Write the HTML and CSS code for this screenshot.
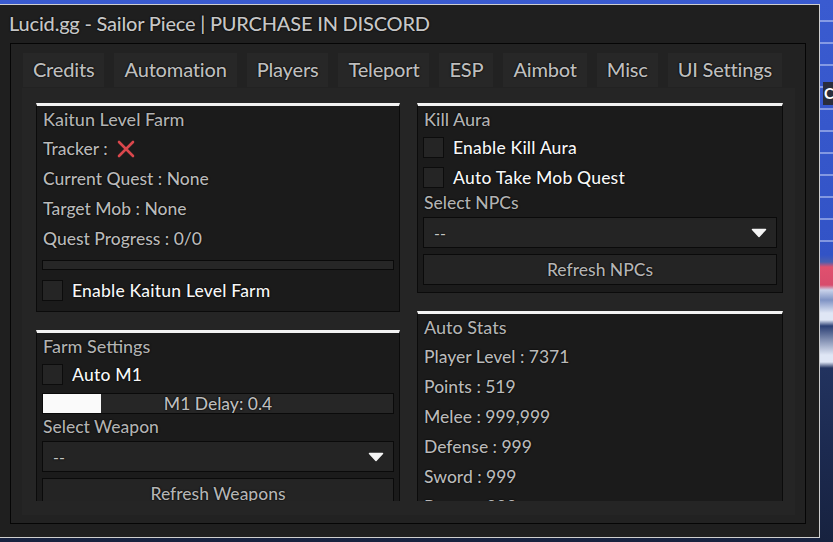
FILE: index.html
```html
<!DOCTYPE html>
<html lang="en">
<head>
<meta charset="utf-8">
<title>Lucid.gg - Sailor Piece</title>
<link rel="stylesheet" href="styles.css">
</head>
<body>
<div class="scene">
  <div class="window">
    <div class="titlebar">Lucid.gg - Sailor Piece | PURCHASE IN DISCORD</div>
    <div class="frame">
      <div class="tabs">
        <div class="tab">Credits</div>
        <div class="tab active">Automation</div>
        <div class="tab">Players</div>
        <div class="tab">Teleport</div>
        <div class="tab">ESP</div>
        <div class="tab">Aimbot</div>
        <div class="tab">Misc</div>
        <div class="tab">UI Settings</div>
      </div>
      <div class="scroll">
        <div class="viewport">
          <div class="col col-left">
            <section class="panel panel-kaitun">
              <div class="p-title">Kaitun Level Farm</div>
              <div class="info">Tracker : <svg class="cross" width="20" height="20" viewBox="0 0 20 20"><path d="M3 3 L17 17 M17 3 L3 17" stroke="#d9474c" stroke-width="2.6" stroke-linecap="round" fill="none"/></svg></div>
              <div class="info">Current Quest : None</div>
              <div class="info">Target Mob : None</div>
              <div class="info">Quest Progress : 0/0</div>
              <div class="progress"></div>
              <div class="check check-kaitun"><span class="box"></span><span class="c-label">Enable Kaitun Level Farm</span></div>
            </section>
            <section class="panel panel-farm">
              <div class="p-title">Farm Settings</div>
              <div class="check"><span class="box"></span><span class="c-label">Auto M1</span></div>
              <div class="slider"><span class="fill" style="width:58px"></span><span class="s-text">M1 Delay: 0.4</span></div>
              <div class="field-label">Select Weapon</div>
              <div class="dropdown"><span class="dd-value">--</span><svg class="dd-arrow" width="16" height="10" viewBox="0 0 16 10"><path d="M1.5 1.5 H14.5 L8 8.5 Z" fill="#f4f4f4" stroke="#f4f4f4" stroke-width="1.5" stroke-linejoin="round"/></svg></div>
              <div class="button">Refresh Weapons</div>
            </section>
          </div>
          <div class="col col-right">
            <section class="panel panel-kill">
              <div class="p-title">Kill Aura</div>
              <div class="check"><span class="box"></span><span class="c-label">Enable Kill Aura</span></div>
              <div class="check"><span class="box"></span><span class="c-label">Auto Take Mob Quest</span></div>
              <div class="field-label">Select NPCs</div>
              <div class="dropdown"><span class="dd-value">--</span><svg class="dd-arrow" width="16" height="10" viewBox="0 0 16 10"><path d="M1.5 1.5 H14.5 L8 8.5 Z" fill="#f4f4f4" stroke="#f4f4f4" stroke-width="1.5" stroke-linejoin="round"/></svg></div>
              <div class="button">Refresh NPCs</div>
            </section>
            <section class="panel panel-stats">
              <div class="p-title">Auto Stats</div>
              <div class="info">Player Level : 7371</div>
              <div class="info">Points : 519</div>
              <div class="info">Melee : 999,999</div>
              <div class="info">Defense : 999</div>
              <div class="info">Sword : 999</div>
              <div class="info">Power : 999</div>
            </section>
          </div>
        </div>
      </div>
    </div>
  </div>
  <div class="bg-sign">C</div>
</div>
</body>
</html>
```
FILE: styles.css
```css
* { box-sizing: border-box; margin: 0; padding: 0; }
html, body { width: 833px; height: 542px; overflow: hidden; }
body {
  font-family: Lato, "Open Sans", sans-serif;
  font-weight: 500;
  background:
    repeating-linear-gradient(180deg, transparent 0 20px, rgba(225,232,255,.45) 20px 22px) 0 0 / 100% 255px no-repeat,
    linear-gradient(180deg, #3a5bd0 0px, #3253c6 255px, #4a5fb0 262px, #e0506e 267px, #d84c6c 285px, #c9d2ea 290px, #7f93c4 300px, #dfe6f5 313px, #dfe6f5 320px, #2b3f74 326px, #dfe6f5 355px, #dfe6f5 362px, #22335f 368px, #1c2a50 450px, #17223f 542px);
}
.scene { position: relative; padding-top: 4px; width: 833px; height: 542px; }
.bg-sign {
  position: absolute; left: 823px; top: 82px; width: 14px; height: 23px;
  background: #2a2d3c; color: #fff; font: bold 15px Lato, sans-serif;
  line-height: 23px; padding-left: 1px;
}
.window {
  width: 820px; height: 534px;
  background: #1f1f1f;
  border: 1px solid #cfcfcf; border-left: none;
  display: flex; flex-direction: column;
}
.titlebar {
  height: 38px; line-height: 37px; padding-left: 9px;
  font-size: 20px; color: #c6c6c6;
  letter-spacing: -0.2px;
  text-shadow: 0 0 2px #000, 0 0 1px #000;
}
.frame {
  margin-left: 10px; width: 796px; height: 481px;
  border: 1px solid #050505; background: #222222;
  padding: 9px 0 0 12px;
}
.tabs { display: flex; gap: 10px; height: 34px; }
.tab {
  padding: 0 10px; height: 34px; line-height: 32px; font-size: 20px;
  letter-spacing: -0.2px;
  color: #bdbdbd; background: #272727;
  text-shadow: 0 0 2px #000, 0 0 1px #000;
}
.scroll {
  margin: 1px 0 0 -1px; width: 773px; height: 427px; background: #252525;
}
.viewport {
  height: 413px; overflow: hidden;
  padding: 15px 0 0 14px;
  display: flex; gap: 17px; align-items: flex-start;
}
.col { display: flex; flex-direction: column; gap: 18px; }
.col-left { width: 364px; }
.col-right { width: 366px; }
.panel {
  background: #1b1b1b;
  border: 1px solid #0b0b0b; border-top: 3px solid #f2f2f2;
  padding: 0 5px;
  display: flex; flex-direction: column;
  font-size: 17.5px;
  text-shadow: 0 0 2px #000, 0 0 1px #000;
}
.panel-kaitun { padding-bottom: 4px; }
.panel-kill { padding-bottom: 7px; }
.p-title { height: 28px; line-height: 27px; padding-left: 1px; color: #b2b2b2; font-size: 18px; }
.info { height: 30px; line-height: 30px; padding-left: 1px; color: #b9b9b9; display: flex; align-items: center; white-space: nowrap; }
.cross { margin-left: 8px; }
.progress { margin-top: 6px; height: 10px; border: 1px solid #0a0a0a; background: #262626; }
.check { height: 30px; display: flex; align-items: flex-start; }
.check-kaitun { margin-top: 7px; }
.box { margin-top: 3px; width: 21px; height: 21px; border: 1px solid #0c0c0c; background: #252525; }
.c-label { margin-left: 9px; margin-top: 3px; line-height: 21px; color: #f6f6f6; letter-spacing: 0.2px; }
.slider {
  position: relative; margin-top: 2px; height: 21px;
  border: 1px solid #0a0a0a; background: #262626;
  display: flex; justify-content: center; align-items: center;
}
.fill { position: absolute; left: 0; top: 0; bottom: 0; background: #fafafa; }
.s-text { position: relative; color: #bdbdbd; }
.field-label { margin-top: 4px; line-height: 18px; padding-bottom: 5px; padding-left: 1px; color: #b2b2b2; }
.panel-kill .field-label { margin-top: 0; }
.dropdown {
  height: 31px; border: 1px solid #0a0a0a; background: #242424;
  display: flex; align-items: center; justify-content: space-between;
  padding: 0 9px 0 10px; color: #c4c4c4;
}
.dd-value { font-size: 16px; }
.button {
  margin-top: 6px; height: 31px; line-height: 29px;
  border: 1px solid #0a0a0a; background: #242424;
  text-align: center; color: #b4b4b4;
}
```
